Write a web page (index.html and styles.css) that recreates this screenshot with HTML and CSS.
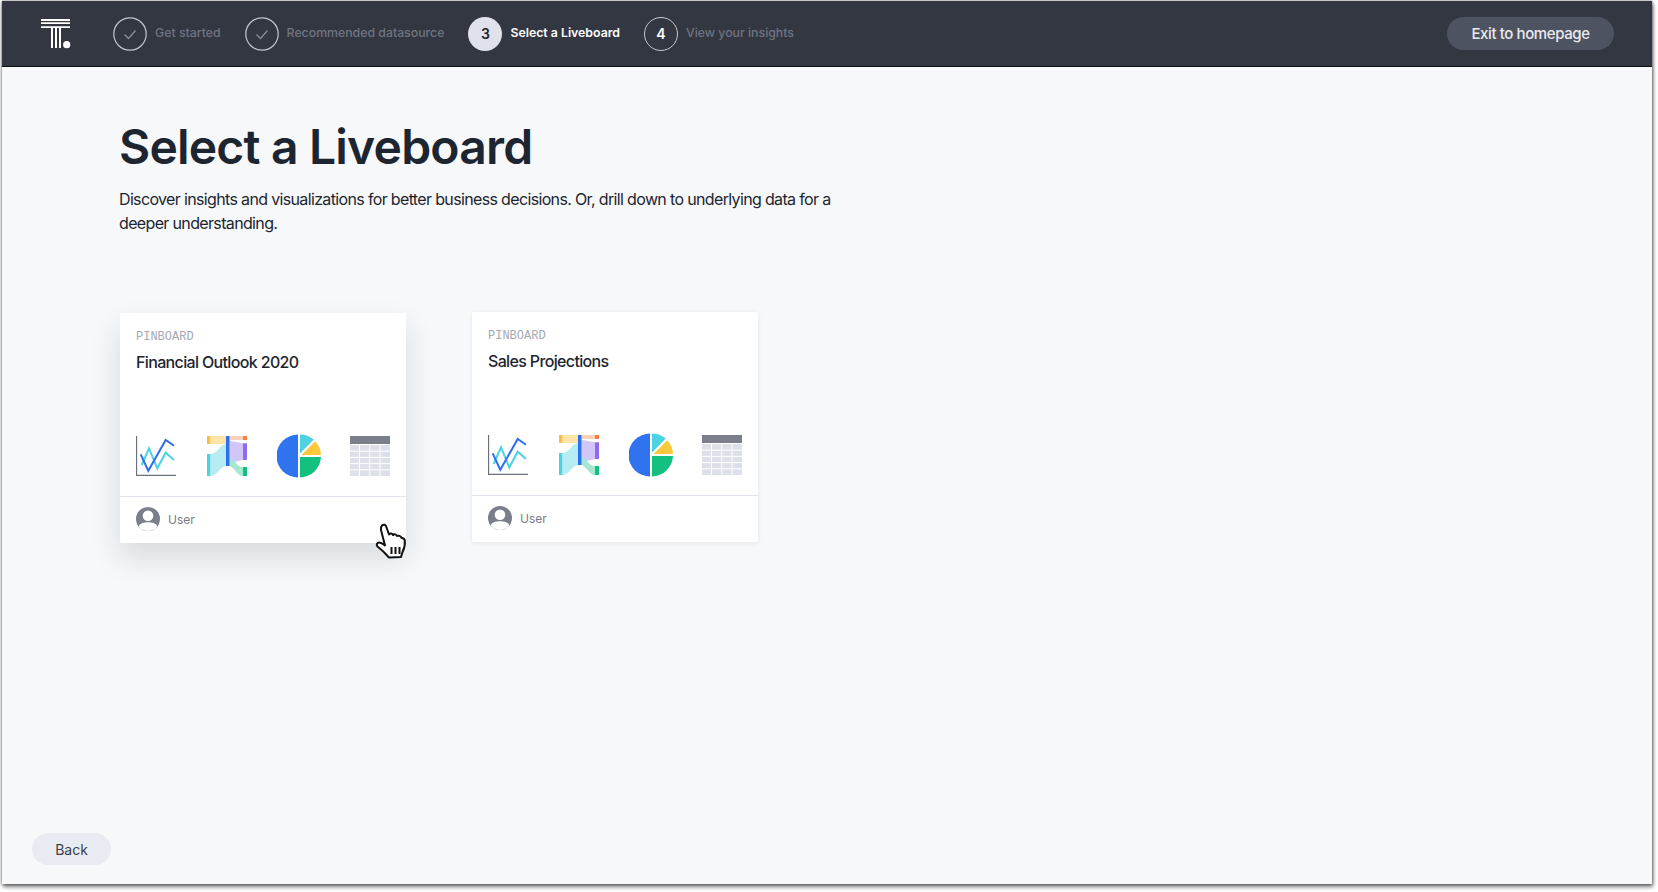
FILE: index.html
```html
<!DOCTYPE html>
<html lang="en">
  <head>
    <meta charset="UTF-8" />
    <meta name="viewport" content="width=device-width, initial-scale=1.0" />
    <title>Select a Liveboard</title>
    <link rel="stylesheet" href="styles.css">
  </head>
  <body>
    <!-- Shared chart icons -->
    <svg class="sprites" width="0" height="0" aria-hidden="true">
      <symbol id="icon-line" viewBox="0 0 40 40">
        <path d="M0.5 0V39.5H40" fill="none" stroke="#6b7080" stroke-width="1.3" />
        <path d="M5.7 29L13 12.3L21.3 32.3L29.7 16.7L38 24" fill="none" stroke="#4dd2e2" stroke-width="2" />
        <path d="M4.7 18.3L12.3 34.7L29.7 4L38 9.7" fill="none" stroke="#2f6fed" stroke-width="2" />
      </symbol>
      <symbol id="icon-sankey" viewBox="0 0 40 40">
        <path d="M3.3 0H19V8H3.3Z" fill="#fde4a8" />
        <path d="M3.3 18C11 18 12 9 19 8V30C12 31 11 40 3.3 40Z" fill="#b5ecf1" />
        <path d="M23 0H36V4H23Z" fill="#fdd0bb" />
        <path d="M23 5L36 7.3V24L23 27Z" fill="#d2c6f7" />
        <path d="M23 22C28 24 30 31 36 31V40C30 40 28 32 23 30Z" fill="#a5e7cf" />
        <rect x="0" y="0" width="3.3" height="8" fill="#fbbf3c" />
        <rect x="0" y="18" width="3.3" height="22" fill="#4dd2e2" />
        <rect x="19" y="0" width="3.6" height="30" fill="#2f6fed" />
        <rect x="36" y="0" width="4" height="4" fill="#fb7f3c" />
        <rect x="36" y="7.3" width="4" height="16.7" fill="#8f6bee" />
        <rect x="36" y="31" width="4" height="9" fill="#13c07f" />
      </symbol>
      <symbol id="icon-pie" viewBox="0 0 44 44">
        <path d="M21 0.5A21.5 21.5 0 0 0 21 43.5Z" fill="#2f73ee" />
        <path d="M23 0.5A21.5 21.5 0 0 1 36.8 5.6L23 19.4Z" fill="#4dd2e2" />
        <path d="M38.2 7.2A21.5 21.5 0 0 1 44 21H24.4Z" fill="#fdc83c" />
        <path d="M23 23H44A21.5 21.5 0 0 1 23 43.5Z" fill="#13c07f" />
      </symbol>
      <symbol id="icon-table" viewBox="0 0 40 40">
        <rect width="40" height="8" fill="#7b7f8c" />
        <path d="M0 9H40V40H0Z" fill="#dde0e8" />
        <path d="M9.5 9V40M19.8 9V40M30 9V40" stroke="#fff" stroke-width="1" />
        <path d="M0 15.2H40M0 21.4H40M0 27.6H40M0 33.8H40" stroke="#fff" stroke-width="1" />
      </symbol>
      <symbol id="icon-user" viewBox="0 0 24 24">
        <circle cx="12" cy="12" r="12" fill="#7b7f8b" />
        <circle cx="12" cy="8.8" r="5.3" fill="#fff" />
        <path d="M2.6 19.4C4 16 8 15.2 12 15.2C16 15.2 20 16 21.4 19.4A12 12 0 0 1 2.6 19.4Z" fill="#fff" />
      </symbol>
      <symbol id="icon-check" viewBox="0 0 34 34">
        <circle cx="17" cy="17" r="16.2" fill="none" stroke="#c5c8d0" stroke-width="1.2" />
        <path d="M11.5 17.5L15.5 21.5L22.5 13.5" fill="none" stroke="#8b8f9a" stroke-width="1.3" />
      </symbol>
    </svg>

    <div class="window">
      <header class="topbar">
        <svg class="logo" width="30" height="30" viewBox="0 0 30 30">
          <path d="M0 1H29M0 4.2H29M0 8.2H29" stroke="#fff" stroke-width="1.8" />
          <path d="M11 9V29M15 9V29M19 9V29" stroke="#fff" stroke-width="2" />
          <circle cx="25.7" cy="25.7" r="3.6" fill="#fff" />
        </svg>
        <ol class="steps">
          <li class="step step-done">
            <svg class="step-check" width="34" height="34"><use href="#icon-check" /></svg>
            <span>Get started</span>
          </li>
          <li class="step step-done">
            <svg class="step-check" width="34" height="34"><use href="#icon-check" /></svg>
            <span>Recommended datasource</span>
          </li>
          <li class="step step-active">
            <div class="step-num">3</div>
            <span>Select a Liveboard</span>
          </li>
          <li class="step">
            <div class="step-num">4</div>
            <span>View your insights</span>
          </li>
        </ol>
        <button class="exit-btn">Exit to homepage</button>
      </header>

      <main class="content">
        <h1>Select a Liveboard</h1>
        <p class="lead">
          Discover insights and visualizations for better business decisions. Or, drill down to underlying data for a
          deeper understanding.
        </p>

        <div class="cards">
          <article class="card card-hover">
            <div class="card-body">
              <div class="card-type">PINBOARD</div>
              <h2>Financial Outlook 2020</h2>
              <div class="card-icons">
                <svg width="40" height="40"><use href="#icon-line" /></svg>
                <svg width="40" height="40"><use href="#icon-sankey" /></svg>
                <svg width="44" height="44"><use href="#icon-pie" /></svg>
                <svg width="40" height="40"><use href="#icon-table" /></svg>
              </div>
            </div>
            <div class="card-foot">
              <svg width="24" height="24"><use href="#icon-user" /></svg>
              <span>User</span>
            </div>
            <!-- Mouse pointer over the hovered card -->
            <svg class="pointer" width="32" height="36" viewBox="0 0 32 36">
              <path d="M7 2.5C8.5 1 10.5 1.6 11.2 3.5L14 11.5C15 10 17.3 10.4 18 12C19 10.8 21.3 11.2 22 13C23.2 12.2 25.8 12.8 26.5 14.8C27.6 15 29.5 15.5 29.8 17.5C30.2 21 29 26 27.5 29L26 34L14 34.5C11 31 7 27 2.5 23.5C1 22 2 19.5 4 19.5C6 19.5 8 21 10 22.5L6 7C5.7 5 6 3.5 7 2.5Z" fill="#fff" stroke="#111" stroke-width="2" stroke-linejoin="round" />
              <path d="M16.5 24V31M20.5 24V31M24.5 24V31" stroke="#111" stroke-width="2" />
            </svg>
          </article>

          <article class="card">
            <div class="card-body">
              <div class="card-type">PINBOARD</div>
              <h2>Sales Projections</h2>
              <div class="card-icons">
                <svg width="40" height="40"><use href="#icon-line" /></svg>
                <svg width="40" height="40"><use href="#icon-sankey" /></svg>
                <svg width="44" height="44"><use href="#icon-pie" /></svg>
                <svg width="40" height="40"><use href="#icon-table" /></svg>
              </div>
            </div>
            <div class="card-foot">
              <svg width="24" height="24"><use href="#icon-user" /></svg>
              <span>User</span>
            </div>
          </article>
        </div>

        <button class="back-btn">Back</button>
      </main>
    </div>
  </body>
</html>
```

FILE: styles.css
```css
/* General Styles */
html,
body {
  height: 100%;
}

body {
  margin: 0;
  background: #fff;
  font-family: Inter, "Liberation Sans", sans-serif;
  color: #1d2530;
  overflow: hidden;
}

.sprites {
  display: block;
  height: 0;
}

.window {
  display: flex;
  flex-direction: column;
  height: 883px;
  margin: 1px 6px 0 2px;
  background: #f6f8fa;
  box-shadow: 0 0 3px rgba(0, 0, 0, 0.55), 1px 3px 4px rgba(0, 0, 0, 0.5);
}

/* Top bar */
.topbar {
  display: flex;
  align-items: center;
  flex: none;
  height: 65px;
  padding: 0 38px 0 39px;
  background: #333742;
  border-bottom: 1px solid #0e1014;
}

.logo {
  flex: none;
  margin-right: 42px;
}

.steps {
  display: flex;
  list-style: none;
  margin: 0;
  padding: 0;
  flex: 1;
}

.step {
  display: flex;
  align-items: center;
  gap: 8px;
  margin-right: 24px;
  font-size: 12.3px;
  font-weight: 500;
  color: #6f7480;
}

.step span {
  padding-bottom: 2px;
}

.step-check {
  display: block;
  flex: none;
}

.step-num {
  display: flex;
  align-items: center;
  justify-content: center;
  box-sizing: border-box;
  width: 34px;
  height: 34px;
  border: 1.2px solid #c5c8d0;
  border-radius: 50%;
  font-size: 14px;
  font-weight: 600;
  color: #fff;
}

.step-active {
  color: #fff;
  font-weight: 600;
}

.step-active .step-num {
  border: none;
  background: #dfe2ea;
  color: #1d2530;
}

.exit-btn {
  height: 33px;
  width: 167px;
  border: none;
  border-radius: 17px;
  background: #4e5361;
  color: #e9ebf0;
  font-family: inherit;
  font-size: 15px;
  font-weight: 500;
  letter-spacing: -0.4px;
}

/* Page content */
.content {
  display: flex;
  flex-direction: column;
  flex: 1;
  padding: 51px 30px 19px;
}

.content h1 {
  margin: 0 0 0 87px;
  font-size: 48px;
  line-height: 58px;
  font-weight: 600;
  letter-spacing: -0.8px;
}

.lead {
  width: 730px;
  margin: 11px 0 0 87px;
  font-size: 16px;
  line-height: 24px;
  letter-spacing: -0.65px;
  color: #1d2530;
}

.cards {
  display: flex;
  gap: 66px;
  margin: 77px 0 0 88px;
}

.card {
  position: relative;
  display: flex;
  flex-direction: column;
  width: 286px;
  height: 230px;
  background: #fff;
  border-radius: 2px;
  box-shadow: 0 1px 4px rgba(30, 40, 60, 0.08);
}

.card-hover {
  transform: translateY(1px);
  box-shadow: 0 14px 30px rgba(30, 40, 60, 0.14);
}

.card-body {
  flex: 1;
  padding: 17px 16px 0;
}

.card-type {
  font-family: "Liberation Mono", monospace;
  font-size: 12px;
  line-height: 14px;
  color: #a5a9b5;
}

.card-body h2 {
  margin: 6px 0 0;
  font-size: 16px;
  line-height: 24px;
  font-weight: 500;
  letter-spacing: -0.65px;
  color: #1d2530;
}

.card-icons {
  display: flex;
  align-items: center;
  justify-content: space-between;
  height: 40px;
  margin-top: 62px;
}

.card-icons svg:nth-child(2),
.card-icons svg:nth-child(3) {
  transform: translateX(1px);
}

.card-foot {
  display: flex;
  align-items: center;
  gap: 8px;
  flex: none;
  box-sizing: border-box;
  height: 47px;
  padding: 0 16px 2px;
  border-top: 1px solid #e1e4ec;
  font-size: 12px;
  color: #777c89;
}

.pointer {
  position: absolute;
  left: 255px;
  top: 210px;
}

.back-btn {
  align-self: flex-start;
  width: 79px;
  height: 32px;
  margin-top: auto;
  border: none;
  border-radius: 16px;
  background: #e9ebf2;
  color: #3a3f4b;
  font-family: inherit;
  font-size: 14px;
  font-weight: 400;
}
```
